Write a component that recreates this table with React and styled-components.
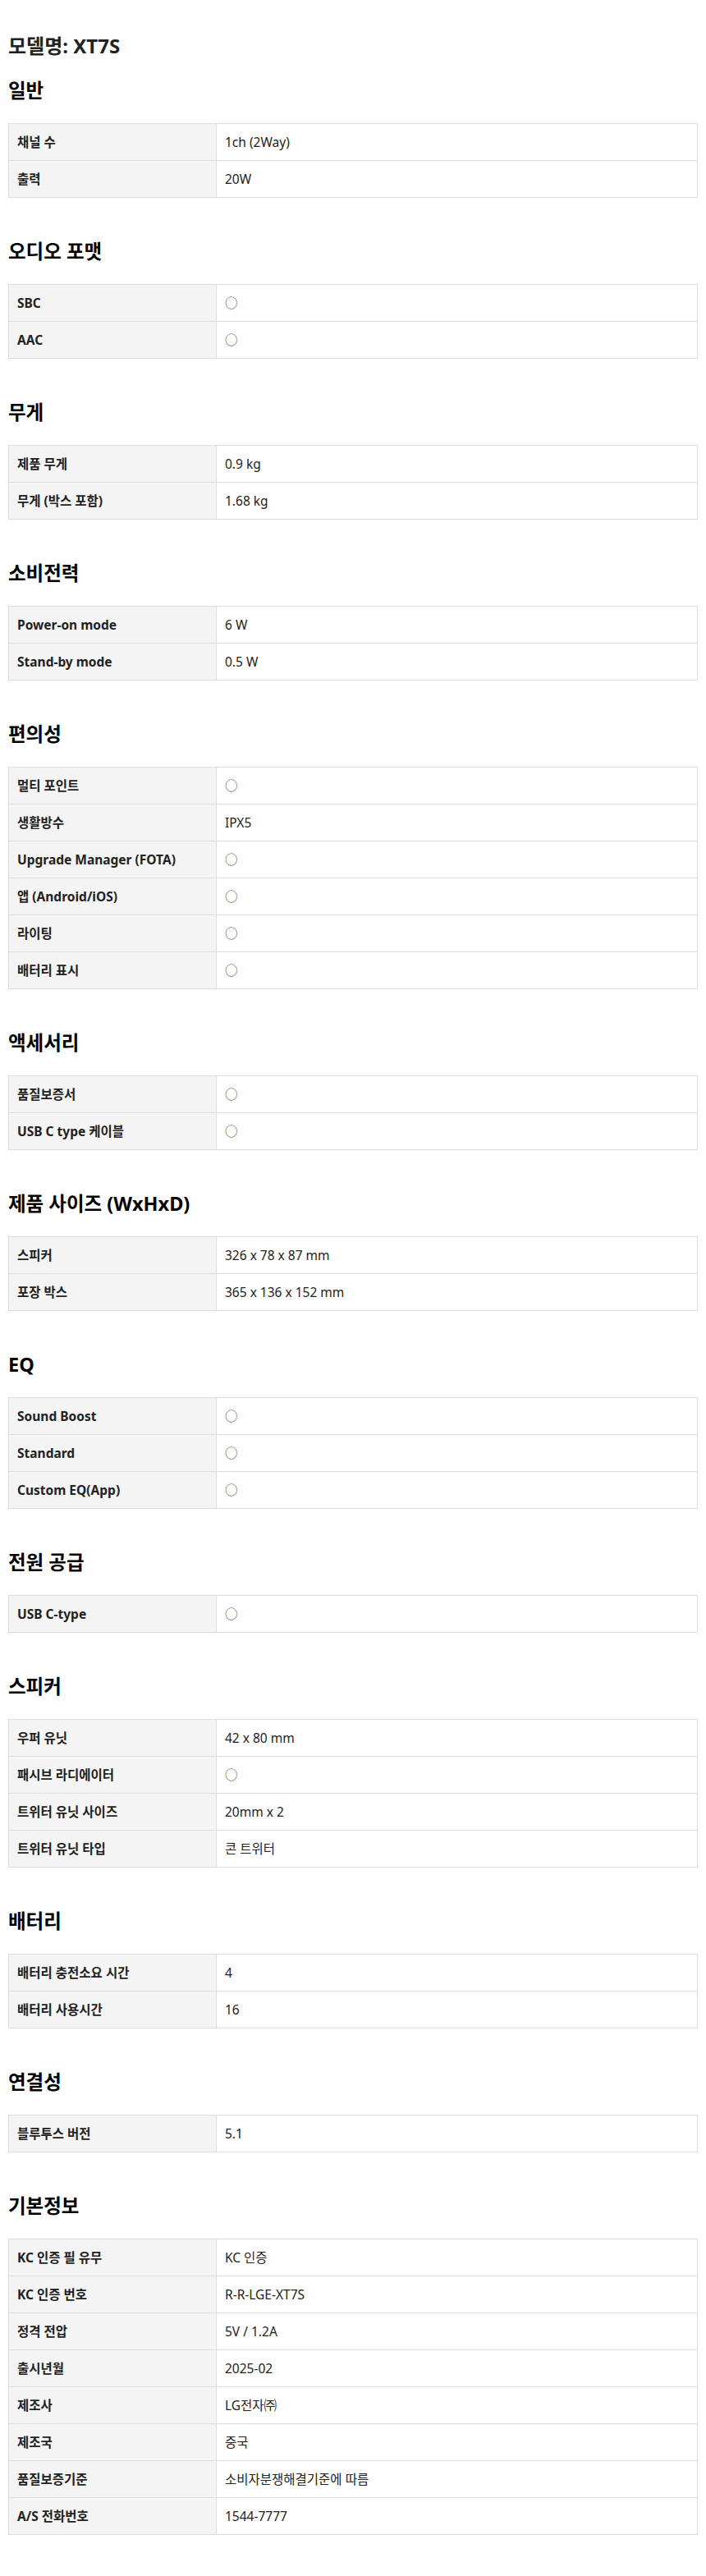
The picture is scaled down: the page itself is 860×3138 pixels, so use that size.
import React from 'react';
import styled, { createGlobalStyle } from 'styled-components';

const GlobalStyle = createGlobalStyle`
    html, body {
        margin: 0;
        padding: 0;
        background: #fff;
    }
    body {
        font-family: "Noto Sans", "Noto Sans CJK KR", sans-serif;
        color: #222;
    }
`;

const O = '○';

const SPECS = [
    {
        title: '일반',
        rows: [['채널 수', '1ch (2Way)'], ['출력', '20W']],
    },
    {
        title: '오디오 포맷',
        rows: [['SBC', O], ['AAC', O]],
    },
    {
        title: '무게',
        rows: [['제품 무게', '0.9 kg'], ['무게 (박스 포함)', '1.68 kg']],
    },
    {
        title: '소비전력',
        rows: [['Power-on mode', '6 W'], ['Stand-by mode', '0.5 W']],
    },
    {
        title: '편의성',
        rows: [
            ['멀티 포인트', O],
            ['생활방수', 'IPX5'],
            ['Upgrade Manager (FOTA)', O],
            ['앱 (Android/iOS)', O],
            ['라이팅', O],
            ['배터리 표시', O],
        ],
    },
    {
        title: '액세서리',
        rows: [['품질보증서', O], ['USB C type 케이블', O]],
    },
    {
        title: '제품 사이즈 (WxHxD)',
        rows: [['스피커', '326 x 78 x 87 mm'], ['포장 박스', '365 x 136 x 152 mm']],
    },
    {
        title: 'EQ',
        rows: [['Sound Boost', O], ['Standard', O], ['Custom EQ(App)', O]],
    },
    {
        title: '전원 공급',
        rows: [['USB C-type', O]],
    },
    {
        title: '스피커',
        rows: [
            ['우퍼 유닛', '42 x 80 mm'],
            ['패시브 라디에이터', O],
            ['트위터 유닛 사이즈', '20mm x 2'],
            ['트위터 유닛 타입', '콘 트위터'],
        ],
    },
    {
        title: '배터리',
        rows: [['배터리 충전소요 시간', '4'], ['배터리 사용시간', '16']],
    },
    {
        title: '연결성',
        rows: [['블루투스 버전', '5.1']],
    },
    {
        title: '기본정보',
        rows: [
            ['KC 인증 필 유무', 'KC 인증'],
            ['KC 인증 번호', 'R-R-LGE-XT7S'],
            ['정격 전압', '5V / 1.2A'],
            ['출시년월', '2025-02'],
            ['제조사', 'LG전자㈜'],
            ['제조국', '중국'],
            ['품질보증기준', '소비자분쟁해결기준에 따름'],
            ['A/S 전화번호', '1544-7777'],
        ],
    },
];

const Page = styled.div`
    padding: 38px 10px 40px;
`;

const ModelTitle = styled.h2`
    margin: 0;
    height: 36px;
    font-size: 24px;
    line-height: 36px;
    font-weight: 700;
    color: #222;
`;

const Section = styled.section`
    margin-top: ${props => (props.first ? '20px' : '49px')};
`;

const SectionTitle = styled.h3`
    margin: 0 0 23px;
    height: 33px;
    font-size: 23.5px;
    line-height: 33px;
    font-weight: 700;
    color: #000;
`;

// separate borders so every row is exactly 45px and the table 45n + 1
const SpecTable = styled.table`
    width: 100%;
    border-collapse: separate;
    border-spacing: 0;
    table-layout: fixed;
    border-top: 1px solid #ddd;
    border-left: 1px solid #ddd;
`;

const LabelCell = styled.th`
    box-sizing: border-box;
    width: 253px;
    height: 45px;
    padding: 0 10px;
    background: #f4f4f4;
    border-right: 1px solid #ddd;
    border-bottom: 1px solid #ddd;
    text-align: left;
    vertical-align: middle;
    font-size: 15.5px;
    line-height: 20px;
    font-weight: 700;
    color: #222;
`;

const ValueCell = styled.td`
    box-sizing: border-box;
    height: 45px;
    padding: 0 10px;
    border-right: 1px solid #ddd;
    border-bottom: 1px solid #ddd;
    vertical-align: middle;
    font-size: 15.5px;
    line-height: 20px;
    font-weight: 400;
    color: ${props => (props.mark ? '#555' : '#222')};
`;

const App = () => (
    <Page>
        <GlobalStyle />
        <ModelTitle>모델명: XT7S</ModelTitle>
        {SPECS.map((spec, i) => (
            <Section key={spec.title} first={i === 0}>
                <SectionTitle>{spec.title}</SectionTitle>
                <SpecTable>
                    <tbody>
                        {spec.rows.map(([label, value]) => (
                            <tr key={label}>
                                <LabelCell scope="row">{label}</LabelCell>
                                <ValueCell mark={value === O}>{value}</ValueCell>
                            </tr>
                        ))}
                    </tbody>
                </SpecTable>
            </Section>
        ))}
    </Page>
);

export default App;
